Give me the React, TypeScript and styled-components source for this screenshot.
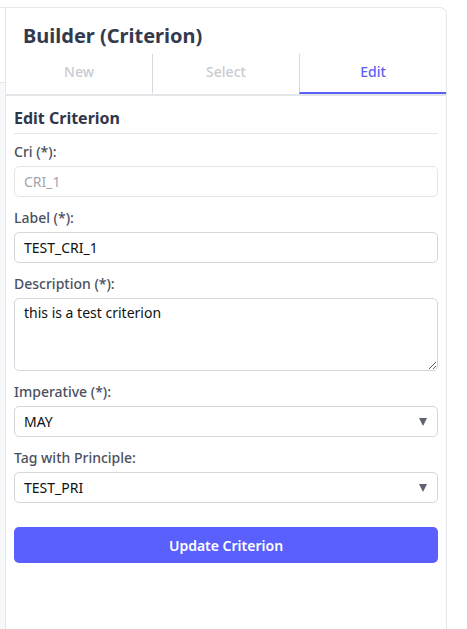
import React from 'react';
import styled, { createGlobalStyle } from 'styled-components';

const GlobalStyle = createGlobalStyle`
  html, body {
    margin: 0;
    padding: 0;
    background: #ffffff;
    font-family: "Noto Sans", "Open Sans", Arial, sans-serif;
  }
  * {
    box-sizing: border-box;
  }
`;

const Page = styled.div`
  display: flex;
  align-items: stretch;
  width: 447px;
  height: 629px;
  padding-top: 7px;
`;

const Gutter = styled.div`
  display: flex;
  flex-direction: column;
  width: 6px;
  border-top: 1px solid #e5e7eb;
  border-right: 1px solid #e5e7eb;
`;

const GutterHead = styled.div`
  height: 75px;
  background: #ffffff;
  border-bottom: 1px solid #e5e7eb;
`;

const GutterBody = styled.div`
  flex: 1;
  background: #f7f8fa;
`;

const Panel = styled.section`
  flex: 1;
  display: flex;
  flex-direction: column;
  background: #ffffff;
  border-top: 1px solid #e5e7eb;
  border-right: 1px solid #e5e7eb;
  border-top-right-radius: 7px;
`;

const Title = styled.h1`
  margin: 0;
  padding: 16px 17px 6px;
  font-size: 20px;
  font-weight: 700;
  line-height: 24px;
  color: #343a4e;
`;

const Tabs = styled.nav`
  display: flex;
  border-bottom: 2px solid #e3e5e9;
`;

const Tab = styled.button<{ $active?: boolean }>`
  flex: 1;
  height: 40px;
  padding: 0 0 3px;
  background: #ffffff;
  border: none;
  border-bottom: 2px solid ${p => (p.$active ? '#5a5ff6' : 'transparent')};
  font-family: inherit;
  font-size: 14px;
  font-weight: 500;
  color: ${p => (p.$active ? '#5b62f5' : '#c9cbd1')};
  cursor: pointer;

  & + & {
    border-left: 1px solid #d6d8de;
  }
`;

const Form = styled.form`
  display: flex;
  flex-direction: column;
  padding: 11px 8px 0 8px;
`;

const SectionTitle = styled.h2`
  margin: 0 0 8px;
  padding-bottom: 4px;
  font-size: 16px;
  font-weight: 700;
  line-height: 22px;
  color: #30364a;
  border-bottom: 1px solid #e5e7eb;
`;

const Field = styled.div`
  display: flex;
  flex-direction: column;
  margin-bottom: 11px;
`;

const Label = styled.label`
  margin-bottom: 4px;
  font-size: 14px;
  font-weight: 500;
  line-height: 20px;
  color: #4b5060;
`;

const Input = styled.input`
  height: 31px;
  padding: 0 9px;
  border: 1px solid #d3d6dc;
  border-radius: 5px;
  background: #ffffff;
  font-family: inherit;
  font-size: 14px;
  color: #111111;
  outline: none;

  &:disabled {
    border-color: #e3e5e9;
    color: #a3a6ad;
  }
`;

const TextArea = styled.textarea`
  height: 73px;
  padding: 4px 9px;
  border: 1px solid #d3d6dc;
  border-radius: 5px;
  font-family: inherit;
  font-size: 14px;
  line-height: 20px;
  color: #111111;
  outline: none;
`;

const SelectWrap = styled.div`
  position: relative;

  &::after {
    content: '';
    position: absolute;
    right: 11px;
    top: 50%;
    margin-top: -4px;
    border-left: 4px solid transparent;
    border-right: 4px solid transparent;
    border-top: 8px solid #5f6370;
    pointer-events: none;
  }
`;

const Select = styled.select`
  width: 100%;
  height: 31px;
  padding: 0 9px;
  appearance: none;
  border: 1px solid #d3d6dc;
  border-radius: 5px;
  background: #ffffff;
  font-family: inherit;
  font-size: 14px;
  color: #111111;
  outline: none;
`;

const SubmitButton = styled.button`
  margin-top: 13px;
  height: 36px;
  border: none;
  border-radius: 5px;
  background: #5a60fd;
  color: #ffffff;
  font-family: inherit;
  font-size: 14px;
  font-weight: 600;
  cursor: pointer;
`;

const App: React.FC = () => {
  const tabs = ['New', 'Select', 'Edit'];

  return (
    <>
      <GlobalStyle />
      <Page>
        <Gutter>
          <GutterHead />
          <GutterBody />
        </Gutter>
        <Panel>
          <Title>Builder (Criterion)</Title>
          <Tabs>
            {tabs.map(t => (
              <Tab key={t} type="button" $active={t === 'Edit'}>
                {t}
              </Tab>
            ))}
          </Tabs>
          <Form onSubmit={e => e.preventDefault()}>
            <SectionTitle>Edit Criterion</SectionTitle>
            <Field>
              <Label>Cri (*):</Label>
              <Input value="CRI_1" disabled readOnly />
            </Field>
            <Field>
              <Label>Label (*):</Label>
              <Input defaultValue="TEST_CRI_1" />
            </Field>
            <Field>
              <Label>Description (*):</Label>
              <TextArea defaultValue="this is a test criterion" />
            </Field>
            <Field>
              <Label>Imperative (*):</Label>
              <SelectWrap>
                <Select defaultValue="MAY">
                  <option>MUST</option>
                  <option>SHOULD</option>
                  <option>MAY</option>
                </Select>
              </SelectWrap>
            </Field>
            <Field>
              <Label>Tag with Principle:</Label>
              <SelectWrap>
                <Select defaultValue="TEST_PRI">
                  <option>TEST_PRI</option>
                </Select>
              </SelectWrap>
            </Field>
            <SubmitButton type="submit">Update Criterion</SubmitButton>
          </Form>
        </Panel>
      </Page>
    </>
  );
};

export default App;
